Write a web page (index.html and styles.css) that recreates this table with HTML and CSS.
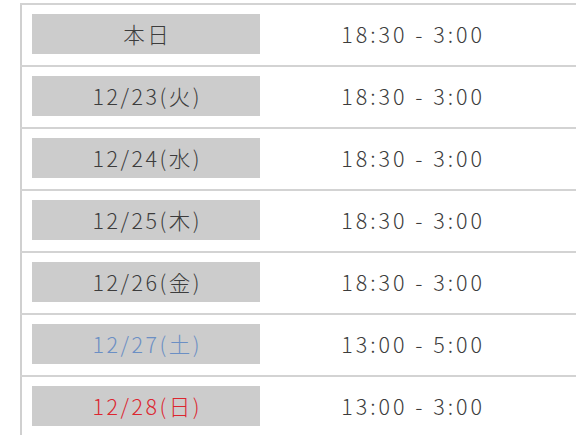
FILE: index.html
```html
<!DOCTYPE html>
<html lang="ja">
<head>
<meta charset="utf-8">
<link rel="stylesheet" href="styles.css">
</head>
<body>
<table class="schedule">
  <tr><td class="day"><span class="badge">本日</span></td><td class="time">18:30 - 3:00</td></tr>
  <tr><td class="day"><span class="badge">12/23(火)</span></td><td class="time">18:30 - 3:00</td></tr>
  <tr><td class="day"><span class="badge">12/24(水)</span></td><td class="time">18:30 - 3:00</td></tr>
  <tr><td class="day"><span class="badge">12/25(木)</span></td><td class="time">18:30 - 3:00</td></tr>
  <tr><td class="day"><span class="badge">12/26(金)</span></td><td class="time">18:30 - 3:00</td></tr>
  <tr><td class="day"><span class="badge sat">12/27(土)</span></td><td class="time">13:00 - 5:00</td></tr>
  <tr><td class="day"><span class="badge sun">12/28(日)</span></td><td class="time">13:00 - 3:00</td></tr>
</table>
</body>
</html>
```
FILE: styles.css
```css
html, body {
  margin: 0;
  padding: 0;
  background: #fff;
  overflow: hidden;
}
body {
  padding: 3px 0 0 20px;
  font-family: "Noto Sans CJK JP", "Noto Sans", sans-serif;
  color: #3c3c3c;
}
.schedule {
  border-collapse: collapse;
  border-left: 2px solid #d0d0d0;
  width: 580px;
}
.schedule td {
  border-top: 2px solid #d3d3d3;
  padding: 9px 0 11px;
  vertical-align: middle;
}
.day {
  width: 228px;
  padding-left: 10px !important;
}
.badge {
  display: flex;
  align-items: center;
  justify-content: center;
  width: 228px;
  height: 40px;
  background: #cccccc;
  font-size: 21.5px;
  font-weight: 300;
  letter-spacing: 2.5px;
  text-indent: 2.5px;
  line-height: 1;
}
.sat { color: #6b8fc4; }
.sun { color: #dc2630; }
.time {
  width: 302px;
  text-align: center;
  font-size: 21.5px;
  font-weight: 300;
  letter-spacing: 3px;
  padding-right: 35px !important;
  line-height: 1;
}
```
